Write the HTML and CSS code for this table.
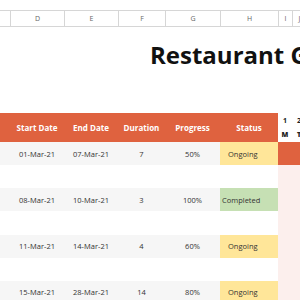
FILE: index.html
```html
<!DOCTYPE html>
<html lang="en">

<head>
    <meta charset="UTF-8">
    <meta name="viewport" content="width=device-width, initial-scale=1.0">
    <title>Restaurant Gantt Chart</title>
    <link rel="stylesheet" href="styles.css">
</head>

<body>
    <div id="sheet">
        <!-- column letters -->
        <div class="row letters">
            <div></div>
            <div>D</div>
            <div>E</div>
            <div>F</div>
            <div>G</div>
            <div>H</div>
            <div>I</div>
            <div>J</div>
        </div>

        <div class="title">Restaurant Gantt Chart</div>

        <div class="row head">
            <div></div>
            <div>Start Date</div>
            <div>End Date</div>
            <div>Duration</div>
            <div>Progress</div>
            <div>Status</div>
            <div class="day"><span>1</span><b>M</b></div>
            <div class="day"><span>2</span><b>T</b></div>
        </div>

        <div class="row task">
            <div></div>
            <div>01-Mar-21</div>
            <div>07-Mar-21</div>
            <div>7</div>
            <div>50%</div>
            <div class="status ongoing">Ongoing</div>
            <div class="bar"></div>
            <div class="bar"></div>
        </div>
        <div class="row gap">
            <div></div><div></div><div></div><div></div><div></div><div></div>
            <div class="free"></div><div class="free"></div>
        </div>

        <div class="row task">
            <div></div>
            <div>08-Mar-21</div>
            <div>10-Mar-21</div>
            <div>3</div>
            <div>100%</div>
            <div class="status done">Completed</div>
            <div class="free"></div>
            <div class="free"></div>
        </div>
        <div class="row gap">
            <div></div><div></div><div></div><div></div><div></div><div></div>
            <div class="free"></div><div class="free"></div>
        </div>

        <div class="row task">
            <div></div>
            <div>11-Mar-21</div>
            <div>14-Mar-21</div>
            <div>4</div>
            <div>60%</div>
            <div class="status ongoing">Ongoing</div>
            <div class="free"></div>
            <div class="free"></div>
        </div>
        <div class="row gap">
            <div></div><div></div><div></div><div></div><div></div><div></div>
            <div class="free"></div><div class="free"></div>
        </div>

        <div class="row task">
            <div></div>
            <div>15-Mar-21</div>
            <div>28-Mar-21</div>
            <div>14</div>
            <div>80%</div>
            <div class="status ongoing">Ongoing</div>
            <div class="free"></div>
            <div class="free"></div>
        </div>
    </div>
</body>

</html>
```

FILE: styles.css
```css
* {
    margin: 0;
    padding: 0;
    box-sizing: border-box;
}

body {
    background-color: #fff;
    overflow: hidden;
    font-family: "Open Sans", "Liberation Sans", sans-serif;
    color: #333;
}

#sheet {
    width: 320px;
}

.row {
    display: grid;
    grid-template-columns: 10px 54px 54px 47px 55px 58px 14px 14px;
}

.row>div {
    display: flex;
    align-items: center;
    justify-content: center;
    white-space: nowrap;
    overflow: hidden;
}

/* spreadsheet column letters */
.letters {
    margin-top: 10px;
    height: 17px;
    border-top: 1px solid #d6d6d6;
    border-bottom: 1px solid #d6d6d6;
    font-size: 7px;
    color: #666;
}

.letters>div {
    border-left: 1px solid #d6d6d6;
}

.letters>div:first-child {
    border-left: none;
}

.title {
    height: 86px;
    padding: 12px 0 0 150px;
    font-size: 24px;
    line-height: 32px;
    font-weight: 700;
    color: #111;
    white-space: nowrap;
}

.head {
    height: 29px;
    background-color: #df623f;
    color: #fff;
    font-size: 8px;
    font-weight: 700;
}

.head .day {
    flex-direction: column;
    background-color: #fff;
    color: #222;
    font-size: 7px;
    line-height: 14px;
}

.task {
    height: 23px;
    background-color: #f6f6f6;
    font-size: 7.5px;
}

.gap {
    height: 23.3px;
}

.status {
    justify-content: flex-start !important;
}

.ongoing {
    background-color: #ffe699;
    padding-left: 8px;
}

.done {
    background-color: #c6e0b4;
    padding-left: 2px;
}

.bar {
    background-color: #df623f;
}

.free {
    background-color: #fcefed;
}
```
